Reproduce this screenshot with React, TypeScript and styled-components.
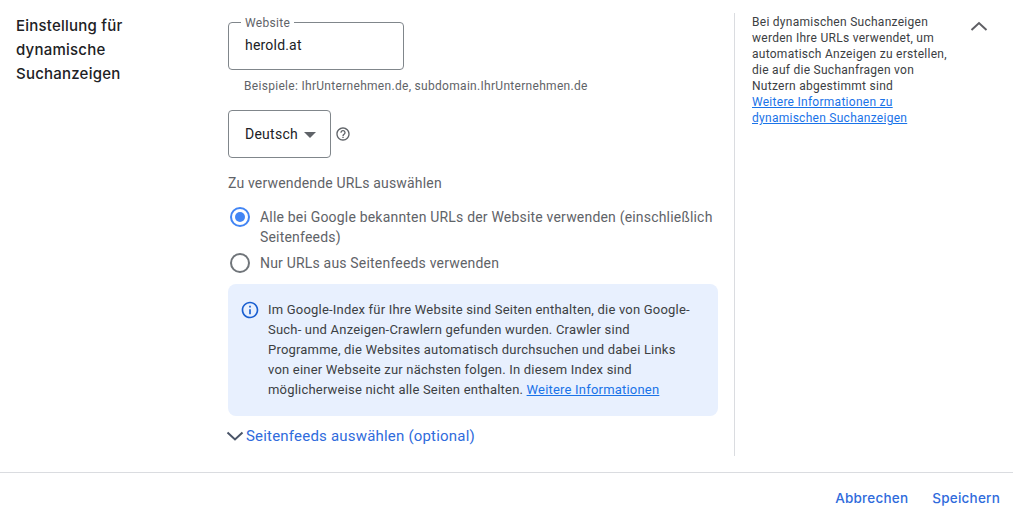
import React from "react";
import styled, { createGlobalStyle } from "styled-components";

const Global = createGlobalStyle`
  html, body { margin: 0; padding: 0; background: #fff; }
  body { font-family: Roboto, "Liberation Sans", sans-serif; color: #3c4043; }
`;

const Page = styled.div`
  width: 1013px;
  height: 519px;
  overflow: hidden;
  display: flex;
  flex-direction: column;
`;

const Body = styled.div`
  height: 472px;
  display: flex;
  box-sizing: border-box;
`;

const Title = styled.h2`
  margin: 14px 0 0 16px;
  width: 212px;
  flex: none;
  font-family: Inter, Roboto, sans-serif;
  font-size: 15px;
  line-height: 24px;
  font-weight: 500;
  letter-spacing: 0.22px;
  color: #202124;
`;

const Main = styled.div`
  width: 490px;
  flex: none;
  padding-top: 22px;
  display: flex;
  flex-direction: column;
`;

const Fieldset = styled.fieldset`
  margin: -7px 0 0;
  padding: 0 0 0 12px;
  width: 176px;
  height: 55px;
  box-sizing: border-box;
  border: 1px solid #80868b;
  border-radius: 4px;
`;

const Legend = styled.legend`
  padding: 1px 4px 0;
  font-size: 12px;
  line-height: 14px;
  color: #5f6368;
  letter-spacing: 0.3px;
`;

const InputValue = styled.div`
  padding: 5px 0 0 4px;
  font-size: 14px;
  line-height: 20px;
  color: #202124;
  letter-spacing: 0.2px;
`;

const Hint = styled.div`
  margin: 8px 0 0 16px;
  font-size: 12px;
  line-height: 16px;
  color: #5f6368;
  letter-spacing: 0.3px;
`;

const LangRow = styled.div`
  margin-top: 16px;
  display: flex;
  align-items: center;
  gap: 4px;
`;

const Select = styled.div`
  width: 103px;
  height: 48px;
  box-sizing: border-box;
  border: 1px solid #80868b;
  border-radius: 4px;
  padding-left: 16px;
  display: flex;
  align-items: center;
  gap: 6px;
  font-size: 14px;
  letter-spacing: 0.25px;
  color: #202124;
`;

const Caret = styled.span`
  width: 0;
  height: 0;
  border-left: 6px solid transparent;
  border-right: 6px solid transparent;
  border-top: 6px solid #5f6368;
  margin-top: 1px;
`;

const Label = styled.div`
  margin-top: 15px;
  font-size: 14px;
  line-height: 20px;
  color: #5f6368;
  letter-spacing: 0.17px;
`;

const Options = styled.div`
  margin-top: 14px;
  display: flex;
  flex-direction: column;
  gap: 6px;
`;

const Option = styled.label`
  display: flex;
  align-items: flex-start;
  gap: 10px;
  padding-left: 2px;
  font-size: 14px;
  line-height: 20px;
  color: #5f6368;
  letter-spacing: 0.19px;
`;

const Radio = styled.span<{ $on?: boolean }>`
  flex: none;
  width: 20px;
  height: 20px;
  box-sizing: border-box;
  border-radius: 50%;
  border: 2px solid ${(p) => (p.$on ? "#4285f4" : "#70757a")};
  display: flex;
  align-items: center;
  justify-content: center;
  &::after {
    content: "";
    display: ${(p) => (p.$on ? "block" : "none")};
    width: 10px;
    height: 10px;
    border-radius: 50%;
    background: #4285f4;
  }
`;

const InfoBox = styled.div`
  margin-top: 11px;
  width: 490px;
  height: 132px;
  box-sizing: border-box;
  background: #e8f0fe;
  border-radius: 8px;
  padding: 16px 20px 0 12px;
  display: flex;
  gap: 8px;
`;

const InfoIcon = styled.svg`
  flex: none;
  width: 20px;
  height: 20px;
  fill: #1a5fd0;
`;

const InfoText = styled.p`
  margin: 0;
  font-size: 13px;
  line-height: 20px;
  color: #3c4043;
  letter-spacing: 0.2px;
`;

const Link = styled.a`
  color: #1a73e8;
  text-decoration: underline;
`;

const Expander = styled.div`
  margin-top: 10px;
  margin-left: -2px;
  display: flex;
  align-items: center;
  gap: 2px;
  font-size: 15px;
  line-height: 20px;
  color: #2f6bdc;
  letter-spacing: 0.2px;
`;

const Side = styled.aside`
  margin-top: 13px;
  margin-left: 16px;
  height: 443px;
  width: 216px;
  flex: none;
  box-sizing: border-box;
  border-left: 1px solid #dadce0;
  padding-left: 17px;
  display: flex;
`;

const SideText = styled.div`
  width: 198px;
  flex: none;
  padding-top: 1px;
  font-size: 12px;
  line-height: 16px;
  color: #3c4043;
  letter-spacing: 0.27px;
`;

const Collapse = styled.span`
  margin: 4px 0 0 20px;
  display: block;
  line-height: 0;
`;

const Footer = styled.footer`
  flex: 1;
  border-top: 1px solid #dadce0;
  display: flex;
  justify-content: flex-end;
  align-items: center;
  gap: 24px;
  padding: 4px 13px 0 0;
`;

const Action = styled.button`
  border: 0;
  padding: 0;
  background: none;
  font-family: Inter, Roboto, sans-serif;
  font-size: 13.5px;
  font-weight: 500;
  letter-spacing: 0.22px;
  color: #2f6bdc;
`;

export default function App() {
  return (
    <Page>
      <Global />
      <Body>
        <Title>
          Einstellung für
          <br />
          dynamische
          <br />
          Suchanzeigen
        </Title>
        <Main>
          <Fieldset>
            <Legend>Website</Legend>
            <InputValue>herold.at</InputValue>
          </Fieldset>
          <Hint>Beispiele: IhrUnternehmen.de, subdomain.IhrUnternehmen.de</Hint>
          <LangRow>
            <Select>
              Deutsch
              <Caret />
            </Select>
            <svg width="16" height="16" viewBox="0 0 24 24" fill="#5f6368">
              <path d="M11 18h2v-2h-2v2zm1-16C6.48 2 2 6.48 2 12s4.48 10 10 10 10-4.48 10-10S17.52 2 12 2zm0 18c-4.41 0-8-3.59-8-8s3.59-8 8-8 8 3.59 8 8-3.59 8-8 8zm0-14c-2.21 0-4 1.79-4 4h2c0-1.1.9-2 2-2s2 .9 2 2c0 2-3 1.75-3 5h2c0-2.25 3-2.5 3-5 0-2.21-1.79-4-4-4z" />
            </svg>
          </LangRow>
          <Label>Zu verwendende URLs auswählen</Label>
          <Options>
            <Option>
              <Radio $on />
              <span>
                Alle bei Google bekannten URLs der Website verwenden (einschließlich Seitenfeeds)
              </span>
            </Option>
            <Option>
              <Radio />
              <span>Nur URLs aus Seitenfeeds verwenden</span>
            </Option>
          </Options>
          <InfoBox>
            <InfoIcon viewBox="0 0 24 24">
              <path d="M11 7h2v2h-2V7zm0 4h2v6h-2v-6zm1-9C6.48 2 2 6.48 2 12s4.48 10 10 10 10-4.48 10-10S17.52 2 12 2zm0 18c-4.41 0-8-3.59-8-8s3.59-8 8-8 8 3.59 8 8-3.59 8-8 8z" />
            </InfoIcon>
            <InfoText>
              Im Google-Index für Ihre Website sind Seiten enthalten, die von Google-Such- und Anzeigen-Crawlern gefunden wurden. Crawler sind Programme, die Websites automatisch durchsuchen und dabei Links von einer Webseite zur nächsten folgen. In diesem Index sind möglicherweise nicht alle Seiten enthalten. <Link>Weitere Informationen</Link>
            </InfoText>
          </InfoBox>
          <Expander>
            <svg width="18" height="18" viewBox="0 0 18 18" fill="none" stroke="#4a5568" strokeWidth="2">
              <path d="M1.5 5.5L9 12.5l7.5-7" />
            </svg>
            Seitenfeeds auswählen (optional)
          </Expander>
        </Main>
        <Side>
          <SideText>
            Bei dynamischen Suchanzeigen
            <br />
            werden Ihre URLs verwendet, um
            <br />
            automatisch Anzeigen zu erstellen,
            <br />
            die auf die Suchanfragen von
            <br />
            Nutzern abgestimmt sind
            <br />
            <Link>
              Weitere Informationen zu
              <br />
              dynamischen Suchanzeigen
            </Link>
          </SideText>
          <Collapse>
            <svg width="18" height="18" viewBox="0 0 18 18" fill="none" stroke="#5f5f64" strokeWidth="2">
              <path d="M1.5 13L9 6l7.5 7" />
            </svg>
          </Collapse>
        </Side>
      </Body>
      <Footer>
        <Action>Abbrechen</Action>
        <Action>Speichern</Action>
      </Footer>
    </Page>
  );
}
